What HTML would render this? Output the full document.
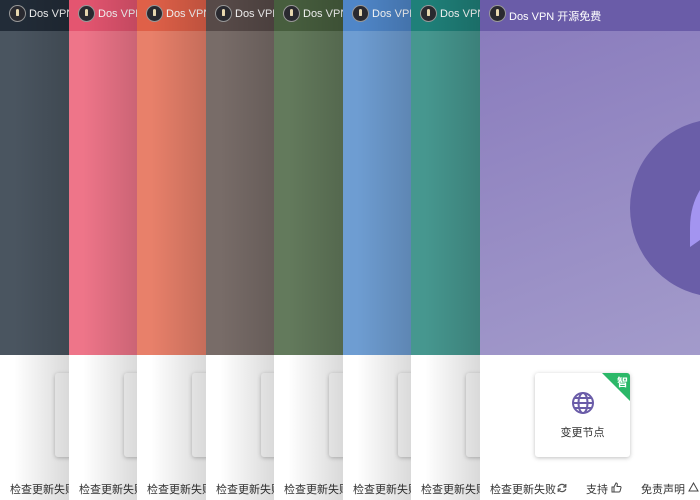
<!DOCTYPE html>
<html><head><meta charset="utf-8"><style>
body{margin:0;width:700px;height:500px;overflow:hidden;position:relative;font-family:"Liberation Sans","Noto Sans CJK SC",sans-serif;background:#fff}
.p{position:absolute;top:0;width:220px;height:500px;overflow:hidden;background:#fff}
.bar{position:absolute;left:0;top:0;width:100%;height:31px}
.body{position:absolute;left:0;top:31px;width:100%;height:324px}
.logo{position:absolute;left:10px;top:6px;width:15px;height:15px;border-radius:50%;background:#2a2a30;box-shadow:0 0 0 1px #999}
.logo:after{content:"";position:absolute;left:6px;top:3px;width:3px;height:7px;border-radius:2px 2px 1px 1px;background:#e8d8b0}
.t{position:absolute;left:29px;top:8px;color:#fff;font-size:11px;white-space:nowrap}
.card{position:absolute;left:55px;top:373px;width:95px;height:84px;background:#fff;border-radius:3px;box-shadow:0 1px 4px rgba(0,0,0,.25)}
.f{position:absolute;left:10px;top:481px;font-size:11px;color:#333;white-space:nowrap}
.sh{position:absolute;left:0;top:0;width:69px;height:500px;background:linear-gradient(90deg,rgba(0,0,0,0) 20%,rgba(0,0,0,.15) 100%)}
</style></head><body>
<div class="p" style="left:0"><div class="bar" style="background:#222c38"></div><div class="body" style="background:#4a5560"></div><div class="logo"></div><div class="t">Dos VPN</div><div class="card"></div><div class="f">检查更新失败</div><div class="sh"></div></div>
<div class="p" style="left:69px"><div class="bar" style="background:#e45570"></div><div class="body" style="background:#ee7589"></div><div class="logo"></div><div class="t">Dos VPN</div><div class="card"></div><div class="f">检查更新失败</div><div class="sh"></div></div>
<div class="p" style="left:137px"><div class="bar" style="background:#df6048"></div><div class="body" style="background:#e8806a"></div><div class="logo"></div><div class="t">Dos VPN</div><div class="card"></div><div class="f">检查更新失败</div><div class="sh"></div></div>
<div class="p" style="left:206px"><div class="bar" style="background:#574a48"></div><div class="body" style="background:#786c68"></div><div class="logo"></div><div class="t">Dos VPN</div><div class="card"></div><div class="f">检查更新失败</div><div class="sh"></div></div>
<div class="p" style="left:274px"><div class="bar" style="background:#475e3e"></div><div class="body" style="background:#637a5c"></div><div class="logo"></div><div class="t">Dos VPN</div><div class="card"></div><div class="f">检查更新失败</div><div class="sh"></div></div>
<div class="p" style="left:343px"><div class="bar" style="background:#4f86c8"></div><div class="body" style="background:#6e9dd2"></div><div class="logo"></div><div class="t">Dos VPN</div><div class="card"></div><div class="f">检查更新失败</div><div class="sh"></div></div>
<div class="p" style="left:411px"><div class="bar" style="background:#1f8079"></div><div class="body" style="background:#46978f"></div><div class="logo"></div><div class="t">Dos VPN</div><div class="card"></div><div class="f">检查更新失败</div><div class="sh"></div></div>
<div class="p" style="left:480px"><div class="bar" style="background:#6a5ca8"></div><div class="body" style="background:linear-gradient(160deg,#8a7cbd,#a39bcb)"></div>
<div style="position:absolute;left:150px;top:119px;width:178px;height:178px;border-radius:50%;background:#6a5ea8"></div>
<svg style="position:absolute;left:200px;top:180px" width="20" height="80"><path d="M20 10 C14 20 10 32 10 48 L10 67 L20 60 Z" fill="#a394f0"/></svg>
<div class="logo"></div><div class="t">Dos VPN 开源免费</div>
<div class="card" style="overflow:hidden"><div style="position:absolute;right:0;top:0;width:0;height:0;border-top:28px solid #2bb868;border-left:28px solid transparent"></div><div style="position:absolute;right:2px;top:1px;color:#fff;font-size:11px;font-weight:bold">智</div>
<svg style="position:absolute;left:36px;top:18px" width="24" height="24" viewBox="0 0 24 24" fill="none" stroke="#6a5ca8" stroke-width="2"><circle cx="12" cy="12" r="10"/><ellipse cx="12" cy="12" rx="4.5" ry="10"/><path d="M2 12h20M3.5 7h17M3.5 17h17"/></svg>
<div style="position:absolute;left:0;width:100%;top:51px;text-align:center;font-size:11px;color:#333">变更节点</div></div>
<div class="f">检查更新失败</div>
<svg style="position:absolute;left:77px;top:483px" width="10" height="10" viewBox="0 0 10 10" fill="none" stroke="#555" stroke-width="1.2"><path d="M8.5 3.5A4 4 0 0 0 1.2 4M1.5 6.5A4 4 0 0 0 8.8 6"/><path d="M8.8 1v3H6M1.2 9V6H4"/></svg>
<div class="f" style="left:106px">支持</div>
<svg style="position:absolute;left:131px;top:482px" width="11" height="11" viewBox="0 0 11 11" fill="none" stroke="#444" stroke-width="1"><path d="M1 5h2v5H1zM3 5l2-4c1 0 1.5.7 1.3 1.8L6 4.5h3c.8 0 1.2.6 1 1.3l-1 3.5c-.2.5-.5.7-1 .7H3"/></svg>
<div class="f" style="left:161px">免责声明</div>
<svg style="position:absolute;left:208px;top:482px" width="11" height="10" viewBox="0 0 11 10" fill="none" stroke="#444" stroke-width="1"><path d="M5.5 1L10 9H1Z"/></svg>
</div>
</body></html>
